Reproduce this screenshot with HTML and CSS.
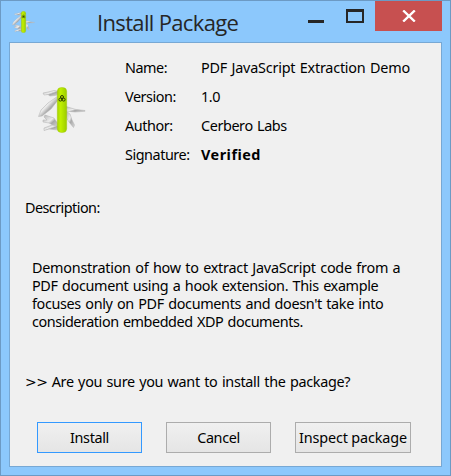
FILE: index.html
```html
<!DOCTYPE html>
<html lang="en">
<head>
    <meta charset="UTF-8">
    <meta name="viewport" content="width=device-width, initial-scale=1.0">
    <title>Install Package</title>
    <link rel="stylesheet" href="styles.css">
</head>
<body>
    <div class="window">
        <div class="titlebar">
            <svg class="app-icon" viewBox="0 0 48 46">
                <use href="#knife"/>
            </svg>
            <h1 class="title">Install Package</h1>
            <div class="controls">
                <span class="minimize"></span>
                <span class="maximize"></span>
                <span class="close">
                    <svg width="14" height="12" viewBox="0 0 14 12">
                        <path d="M1.2 0.5 L12.8 11.5 M12.8 0.5 L1.2 11.5" stroke="#fff" stroke-width="2.4"/>
                    </svg>
                </span>
            </div>
        </div>

        <div class="content">
            <div class="package">
                <svg class="package-icon" viewBox="0 0 48 46">
                    <defs>
                        <linearGradient id="steel" x1="0" y1="0" x2="1" y2="1">
                            <stop offset="0" stop-color="#b4b4b4"/>
                            <stop offset="0.45" stop-color="#ececec"/>
                            <stop offset="0.6" stop-color="#a8a8a8"/>
                            <stop offset="1" stop-color="#dadada"/>
                        </linearGradient>
                        <linearGradient id="handle" x1="0" x2="1" y1="0" y2="0">
                            <stop offset="0" stop-color="#a8d400"/>
                            <stop offset="0.35" stop-color="#c0f000"/>
                            <stop offset="1" stop-color="#9ccc00"/>
                        </linearGradient>
                    </defs>
                    <g id="knife">
                        <!-- blades -->
                        <g fill="url(#steel)" stroke="#b0b0b0" stroke-width="0.5">
                            <path d="M20 4 L16 3.5 L10 5 L5 6 L6 8 L10 7.5 L12 9 L20 8 Z"/>
                            <path d="M20 9 L10 16 L3 23 L0.5 29.5 L4 29 L13 22 L20 13 Z"/>
                            <path d="M20 37 L16 31 L7 28 L6 30 L9 33 L5 33 L5 35 L11 36 L20 41 Z"/>
                            <path d="M20 39 L14 38 L6 41 L6 43.5 L11 42 L20 43 Z"/>
                            <path d="M28 19.5 L38 22.5 L47 23.5 L47 24.3 L37 25 L28 24 Z"/>
                            <path d="M28 24 L32 27 L34 33 L36.5 38 L35.5 40.5 L31 35 L28 30 Z"/>
                        </g>
                        <rect x="19.3" y="0.5" width="9.4" height="45" rx="4" fill="url(#handle)" stroke="#9cc400" stroke-width="0.4"/>
                        <!-- biohazard mark -->
                        <g fill="none" stroke="#2c3a00" stroke-width="1">
                            <circle cx="24" cy="10" r="1.5"/>
                            <circle cx="22.4" cy="12.6" r="1.5"/>
                            <circle cx="25.6" cy="12.6" r="1.5"/>
                        </g>
                        <circle cx="24" cy="11.8" r="1" fill="#2c3a00"/>
                    </g>
                </svg>
                <div class="details">
                    <span class="label">Name:</span>
                    <span class="value name">PDF JavaScript Extraction Demo</span>
                    <span class="label">Version:</span>
                    <span class="value">1.0</span>
                    <span class="label">Author:</span>
                    <span class="value">Cerbero Labs</span>
                    <span class="label">Signature:</span>
                    <span class="value verified">Verified</span>
                </div>
            </div>

            <p class="heading">Description:</p>

            <p class="description">
                <span class="line line-1">Demonstration of how to extract JavaScript code from a</span>
                <span class="line line-2">PDF document using a hook extension. This example</span>
                <span class="line line-3">focuses only on PDF documents and doesn't take into</span>
                <span class="line line-4">consideration embedded XDP documents.</span>
            </p>

            <p class="question"><span class="prompt">&gt;&gt;</span> Are you sure you want to install the package?</p>

            <div class="buttons">
                <button class="button default">Install</button>
                <button class="button">Cancel</button>
                <button class="button wide">Inspect package</button>
            </div>
        </div>
    </div>
</body>
</html>
```

FILE: styles.css
```css
* {
    box-sizing: border-box;
}

body {
    margin: 0;
    font-family: "Noto Sans", sans-serif;
    font-size: 14.4px;
    line-height: 18px;
    color: #000;
}

p, h1 {
    margin: 0;
}

.window {
    width: 451px;
    height: 476px;
    padding: 0 8px 8px;
    background-color: #8cc8fc;
    border: 1px solid #6c9ac4;
    display: flex;
    flex-direction: column;
}

/* Title bar */
.titlebar {
    height: 41px;
    display: flex;
    flex-shrink: 0;
}

.app-icon {
    width: 23px;
    height: 22px;
    margin: 10px 0 0 3px;
}

.title {
    margin: 6px 0 0 62px;
    width: 145px;
    font-family: "Open Sans", sans-serif;
    font-size: 22px;
    font-weight: normal;
    line-height: 30px;
    letter-spacing: -0.66px;
    white-space: nowrap;
    color: #262626;
}

.controls {
    margin-left: auto;
    display: flex;
    align-items: flex-start;
}

.minimize {
    width: 16px;
    height: 3px;
    margin: 19px 22px 0 0;
    background-color: #262626;
}

.maximize {
    width: 18px;
    height: 14px;
    margin: 8px 11px 0 0;
    border: 2px solid #262626;
    border-top-width: 3px;
}

.close {
    width: 67px;
    height: 30px;
    display: flex;
    align-items: center;
    justify-content: center;
    background-color: #c75050;
}

/* Dialog body */
.content {
    flex-grow: 1;
    padding: 16px 15px 0;
    background-color: #f0f0f0;
    border: 1px solid #77a8d4;
}

.package {
    display: flex;
}

.package-icon {
    width: 48px;
    height: 46px;
    margin: 28px 0 0 13px;
}

.details {
    margin-left: 39px;
    display: grid;
    grid-template-columns: 76px auto;
    row-gap: 11px;
    white-space: nowrap;
}

.label {
    letter-spacing: -0.45px;
}

.value {
    letter-spacing: -0.4px;
    word-spacing: 1px;
}

.name {
    letter-spacing: -0.22px;
}

.verified {
    font-weight: bold;
    letter-spacing: 0.5px;
}

.heading {
    margin-top: 35px;
    letter-spacing: -0.55px;
}

.description {
    margin: 42px 0 0 7px;
}

.line {
    display: block;
    white-space: nowrap;
    word-spacing: 1px;
}

.line-1 {
    letter-spacing: -0.25px;
}

.line-2 {
    letter-spacing: -0.34px;
}

.line-3 {
    letter-spacing: -0.35px;
}

.line-4 {
    letter-spacing: -0.44px;
}

.question {
    height: 18px;
    margin-top: 42px;
    letter-spacing: -0.32px;
    word-spacing: 1px;
}

.prompt {
    font-family: "DejaVu Sans", sans-serif;
    font-size: 14px;
    line-height: 1;
    letter-spacing: -0.6px;
}

/* Buttons */
.buttons {
    margin: 31px 0 0 12px;
    display: flex;
    gap: 24px;
}

.button {
    width: 105px;
    height: 31px;
    padding: 1px 0 0;
    font: inherit;
    letter-spacing: -0.35px;
    color: #000;
    background: linear-gradient(#f0f0f0, #e5e5e5);
    border: 1px solid #acacac;
    white-space: nowrap;
}

.button.default {
    border-color: #3399ff;
}

.button.wide {
    width: 116px;
    letter-spacing: -0.15px;
}
```
